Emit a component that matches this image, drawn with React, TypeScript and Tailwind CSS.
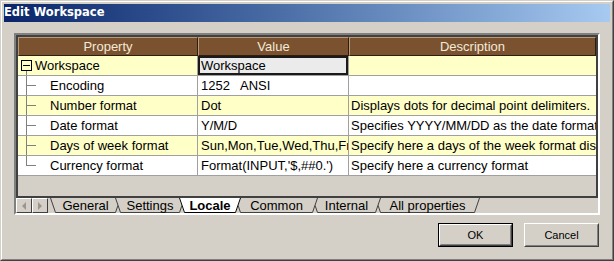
import React from "react";

type Row = {
  prop: string;
  value: string;
  desc: string;
  tree: "root" | "mid" | "last";
  yellow: boolean;
  selected?: boolean;
};

const rows: Row[] = [
  { prop: "Workspace", value: "Workspace", desc: "", tree: "root", yellow: true, selected: true },
  { prop: "Encoding", value: "1252   ANSI", desc: "", tree: "mid", yellow: false },
  { prop: "Number format", value: "Dot", desc: "Displays dots for decimal point delimiters.", tree: "mid", yellow: true },
  { prop: "Date format", value: "Y/M/D", desc: "Specifies YYYY/MM/DD as the date format", tree: "mid", yellow: false },
  { prop: "Days of week format", value: "Sun,Mon,Tue,Wed,Thu,Fri,Sat", desc: "Specify here a days of the week format display", tree: "mid", yellow: true },
  { prop: "Currency format", value: "Format(INPUT,'$,##0.')", desc: "Specify here a currency format", tree: "last", yellow: false },
];

// tab widths measured on the top edge; neighbours overlap by 6px
const tabs = [
  { label: "General", w: 71, z: "z-[1]" },
  { label: "Settings", w: 70, z: "z-[2]" },
  { label: "Locale", w: 62, z: "z-[7]", active: true },
  { label: "Common", w: 83, z: "z-[5]" },
  { label: "Internal", w: 69, z: "z-[4]" },
  { label: "All properties", w: 105, z: "z-[3]" },
];

function TreeGlyph({ kind }: { kind: Row["tree"] }) {
  if (kind === "root") {
    return (
      <svg width="17" height="19" className="shrink-0">
        <rect x="3.5" y="4.5" width="10" height="10" fill="none" stroke="#000" />
        <line x1="5" y1="9.5" x2="12" y2="9.5" stroke="#000" />
        <line x1="8.5" y1="15" x2="8.5" y2="19" stroke="#808080" />
      </svg>
    );
  }
  return (
    <svg width="32" height="19" className="shrink-0">
      <line x1="8.5" y1="0" x2="8.5" y2={kind === "last" ? 10 : 19} stroke="#808080" />
      <line x1="8.5" y1="9.5" x2="18" y2="9.5" stroke="#808080" />
    </svg>
  );
}

function Tab({ label, w, z, active, first }: { label: string; w: number; z: string; active?: boolean; first: boolean }) {
  return (
    <div
      className={`relative flex h-[15px] shrink-0 items-center justify-center ${z} ${first ? "ml-[2px]" : "-ml-[6px]"}`}
      style={{ width: w }}
    >
      <svg width={w} height="15" className="absolute left-0 top-0">
        <polygon points={`0,0 ${w},0 ${w - 5},14.5 5,14.5`} fill={active ? "#ffffff" : "#d4d0c8"} />
        <polyline points={`0.5,0 5.5,14.5 ${w - 5.5},14.5 ${w - 0.5},0`} fill="none" stroke={active ? "#000" : "#404040"} />
      </svg>
      <span className={`relative leading-none ${active ? "font-bold" : ""}`}>{label}</span>
    </div>
  );
}

function ScrollBtn({ dir }: { dir: "l" | "r" }) {
  return (
    <div className="flex h-[15px] w-[16px] shrink-0 items-center justify-center border border-t-white border-l-white border-r-[#404040] border-b-[#404040] bg-[#d4d0c8]">
      <svg width="6" height="8">
        {dir === "l" ? <polygon points="5,0 5,8 1,4" fill="#9a968e" /> : <polygon points="1,0 1,8 5,4" fill="#9a968e" />}
      </svg>
    </div>
  );
}

function Button({ label, isDefault }: { label: string; isDefault?: boolean }) {
  return (
    <div className={`h-[24px] w-[75px] ${isDefault ? "border border-black" : ""}`}>
      <div className="h-full w-full border border-t-white border-l-white border-r-[#404040] border-b-[#404040]">
        <div className="flex h-full w-full items-center justify-center border border-t-[#d4d0c8] border-l-[#d4d0c8] border-r-[#808080] border-b-[#808080] text-[11px] text-black">
          {label}
        </div>
      </div>
    </div>
  );
}

export default function App() {
  return (
    <div
      className="h-[261px] w-[614px] overflow-hidden border border-t-[#d4d0c8] border-l-[#d4d0c8] border-r-[#404040] border-b-[#404040] bg-[#d4d0c8]"
      style={{ fontFamily: '"Liberation Sans", Arial, sans-serif' }}
    >
      <div className="flex h-full w-full flex-col border border-t-white border-l-white border-r-[#808080] border-b-[#808080] p-[2px]">
        {/* title bar */}
        <div className="flex h-[18px] shrink-0 items-center bg-gradient-to-r from-[#0a246a] to-[#a6caf0]">
          <span className="text-[11.5px] font-bold leading-none text-white" style={{ fontFamily: '"DejaVu Sans", sans-serif' }}>
            Edit Workspace
          </span>
        </div>

        {/* property grid panel */}
        <div className="mx-[10px] mt-[11px] flex h-[182px] flex-col border-2 border-t-[#808080] border-l-[#808080] border-r-white border-b-white text-[13px] text-black">
          <div className="flex h-[163px] flex-col border-2 border-[#404040] bg-[#d4d0c8]">
            <div className="flex h-[19px] shrink-0 bg-[#7b5230] text-[#f3ead8]">
              <div className="flex w-[180px] items-center justify-center border border-t-[#b89a78] border-l-[#b89a78] border-r-[#2e1e0e] border-b-[#2e1e0e]">Property</div>
              <div className="flex w-[151px] items-center justify-center border border-t-[#b89a78] border-l-[#b89a78] border-r-[#2e1e0e] border-b-[#2e1e0e]">Value</div>
              <div className="flex flex-1 items-center justify-center border border-t-[#b89a78] border-l-[#b89a78] border-r-[#2e1e0e] border-b-[#2e1e0e]">Description</div>
            </div>
            {rows.map((r) => (
              <div key={r.prop} className={`flex h-[20px] shrink-0 border-b border-[#a0a0a0] ${r.yellow ? "bg-[#ffffc8]" : "bg-white"}`}>
                <div className="flex w-[180px] items-center overflow-hidden whitespace-nowrap border-r border-[#a0a0a0]">
                  <TreeGlyph kind={r.tree} />
                  <span>{r.prop}</span>
                </div>
                {r.selected ? (
                  <div className="flex w-[150px] items-center overflow-hidden whitespace-pre border-2 border-[#1a1a1a] bg-[#ebebeb] pl-[1px]">
                    {r.value}
                  </div>
                ) : (
                  <div className="flex w-[150px] items-center overflow-hidden whitespace-pre pl-[3px]">{r.value}</div>
                )}
                <div className="flex flex-1 items-center overflow-hidden whitespace-nowrap border-l border-[#a0a0a0] pl-[2px]">{r.desc}</div>
              </div>
            ))}
          </div>

          {/* sheet tabs */}
          <div className="flex h-[15px] shrink-0 items-start">
            <ScrollBtn dir="l" />
            <ScrollBtn dir="r" />
            {tabs.map((t, i) => (
              <Tab key={t.label} label={t.label} w={t.w} z={t.z} active={t.active} first={i === 0} />
            ))}
          </div>
        </div>

        {/* buttons */}
        <div className="mr-[11px] mt-[8px] flex justify-end gap-[11px]">
          <Button label="OK" isDefault />
          <Button label="Cancel" />
        </div>
      </div>
    </div>
  );
}
